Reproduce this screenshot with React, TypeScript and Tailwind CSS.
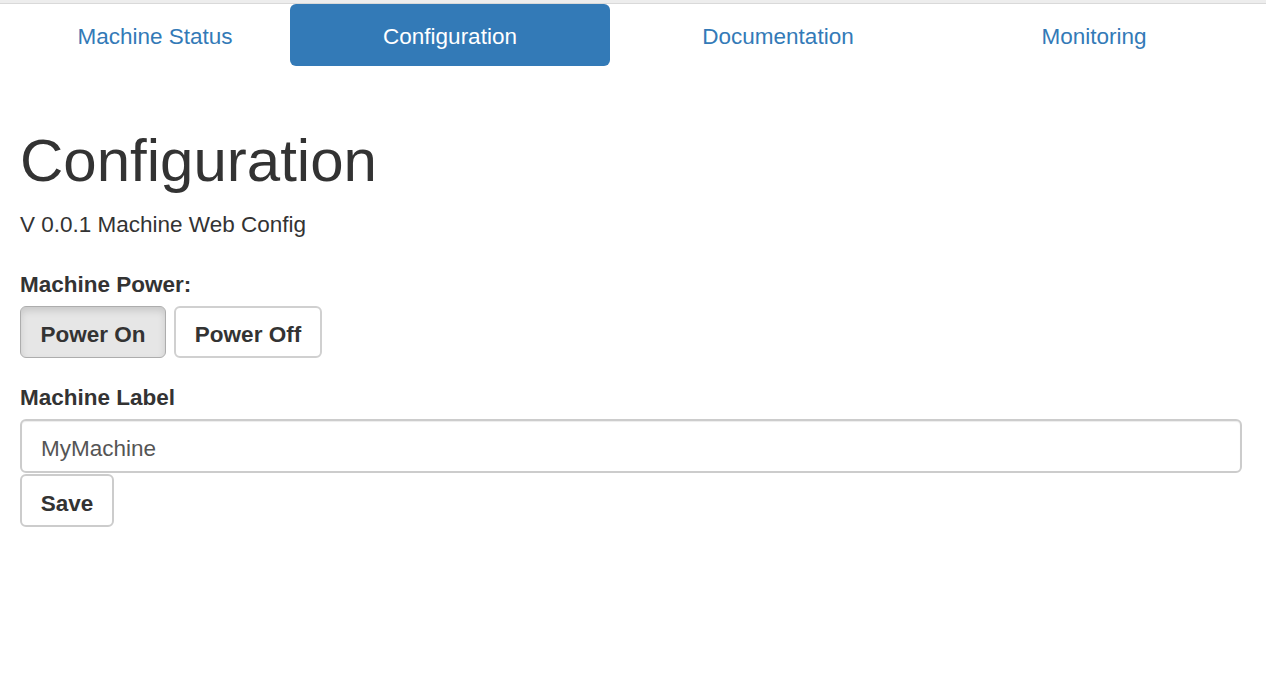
import React from "react";

const font = { fontFamily: '"Liberation Sans", Arial, Helvetica, sans-serif' };

export default function App() {
  const tabs = [
    { label: "Machine Status", w: "w-[270px]" },
    { label: "Configuration", w: "w-[320px]", active: true },
    { label: "Documentation", w: "w-[336px]" },
    { label: "Monitoring", w: "w-[296px]" },
  ];
  return (
    <div className="min-h-[700px] bg-white text-[#333333]" style={font}>
      <div className="h-[4px] bg-[#ededed] border-b border-[#d9d9d9]" />
      <div className="px-[20px]">
        <nav className="flex h-[62px] w-[1222px]">
          {tabs.map((t) => (
            <a
              key={t.label}
              href="#"
              className={`${t.w} flex items-center justify-center rounded-[6px] pt-[4px] text-[22.5px] ${
                t.active ? "bg-[#337ab7] text-white" : "text-[#337ab7]"
              }`}
            >
              {t.label}
            </a>
          ))}
        </nav>
        <h1 className="mt-[62px] text-[60px] leading-[66px] font-normal">Configuration</h1>
        <p className="mt-[15px] text-[22.5px] leading-[32px]">V 0.0.1 Machine Web Config</p>
        <div className="mt-[28px] text-[22.5px] leading-[32px] font-bold">Machine Power:</div>
        <div className="mt-[5px] flex gap-[8px]">
          <button className="h-[52px] w-[146px] rounded-[6px] border border-[#adadad] bg-[#e6e6e6] pt-[6px] text-[22.5px] font-bold text-[#333] shadow-[inset_0_4px_7px_rgba(0,0,0,0.125)]">
            Power On
          </button>
          <button className="h-[52px] w-[148px] rounded-[6px] border-2 border-[#d0d0d0] bg-white pt-[6px] text-[22.5px] font-bold text-[#333]">
            Power Off
          </button>
        </div>
        <div className="mt-[24px] text-[22.5px] leading-[32px] font-bold">Machine Label</div>
        <input
          defaultValue="MyMachine"
          className="mt-[5px] block h-[54px] w-[1222px] rounded-[6px] border-2 border-[#cccccc] px-[19px] pt-[6px] text-[22.5px] text-[#555555] outline-none shadow-[inset_0_1px_1px_rgba(0,0,0,0.075)]"
          style={font}
        />
        <button className="mt-[1px] h-[53px] w-[94px] rounded-[6px] border-2 border-[#cccccc] bg-white pt-[6px] text-[22.5px] font-bold text-[#333]">
          Save
        </button>
      </div>
    </div>
  );
}
